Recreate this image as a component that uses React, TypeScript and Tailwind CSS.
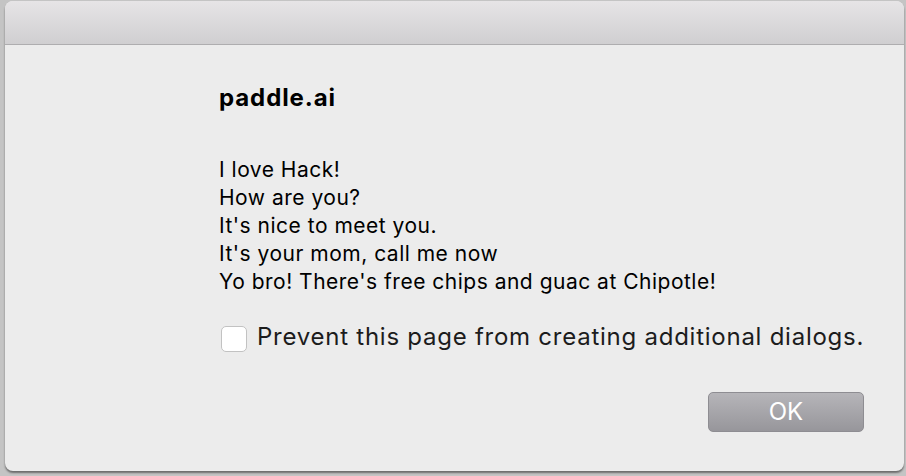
export default function App() {
  return (
    <div className="w-[906px] h-[476px] bg-[#c4c4c4] pl-[5px] pt-[1px] pb-[5px] pr-[2px] overflow-hidden" style={{ fontFamily: 'Inter, "Noto Sans", sans-serif' }}>
      <div className="w-full h-full rounded-[8px] overflow-hidden bg-[#ececec] flex flex-col shadow-[0_2px_2px_rgba(0,0,0,0.45)]">
        <div className="h-[44px] shrink-0 bg-gradient-to-b from-[#e6e4e6] to-[#d0cfd1] border-b border-[#aeadaf]" />
        <div className="flex flex-col pl-[214px] pt-[39px]">
          <div className="text-[24px] font-bold text-black leading-[28px] tracking-[0.9px]">paddle.ai</div>
          <div className="mt-[44px] text-[21px] text-black leading-[28px] tracking-[0.5px]">
            <div>I love Hack!</div>
            <div>How are you?</div>
            <div>It's nice to meet you.</div>
            <div>It's your mom, call me now</div>
            <div>Yo bro! There's free chips and guac at Chipotle!</div>
          </div>
          <div className="mt-[26px] flex items-start gap-[10px] pl-[2px]">
            <div className="mt-[4px] w-[26px] h-[26px] rounded-[5px] bg-white border border-[#c2c2c2]" />
            <div className="text-[24px] text-[#1c1c1c] leading-[30px] tracking-[0.75px]">Prevent this page from creating additional dialogs.</div>
          </div>
          <div className="flex justify-end pr-[40px] mt-[40px]">
            <div className="w-[156px] h-[40px] rounded-[5px] border border-[#8e8d92] bg-gradient-to-b from-[#b6b5b9] to-[#97969b] flex items-center justify-center text-white text-[24px]">OK</div>
          </div>
        </div>
      </div>
    </div>
  );
}
